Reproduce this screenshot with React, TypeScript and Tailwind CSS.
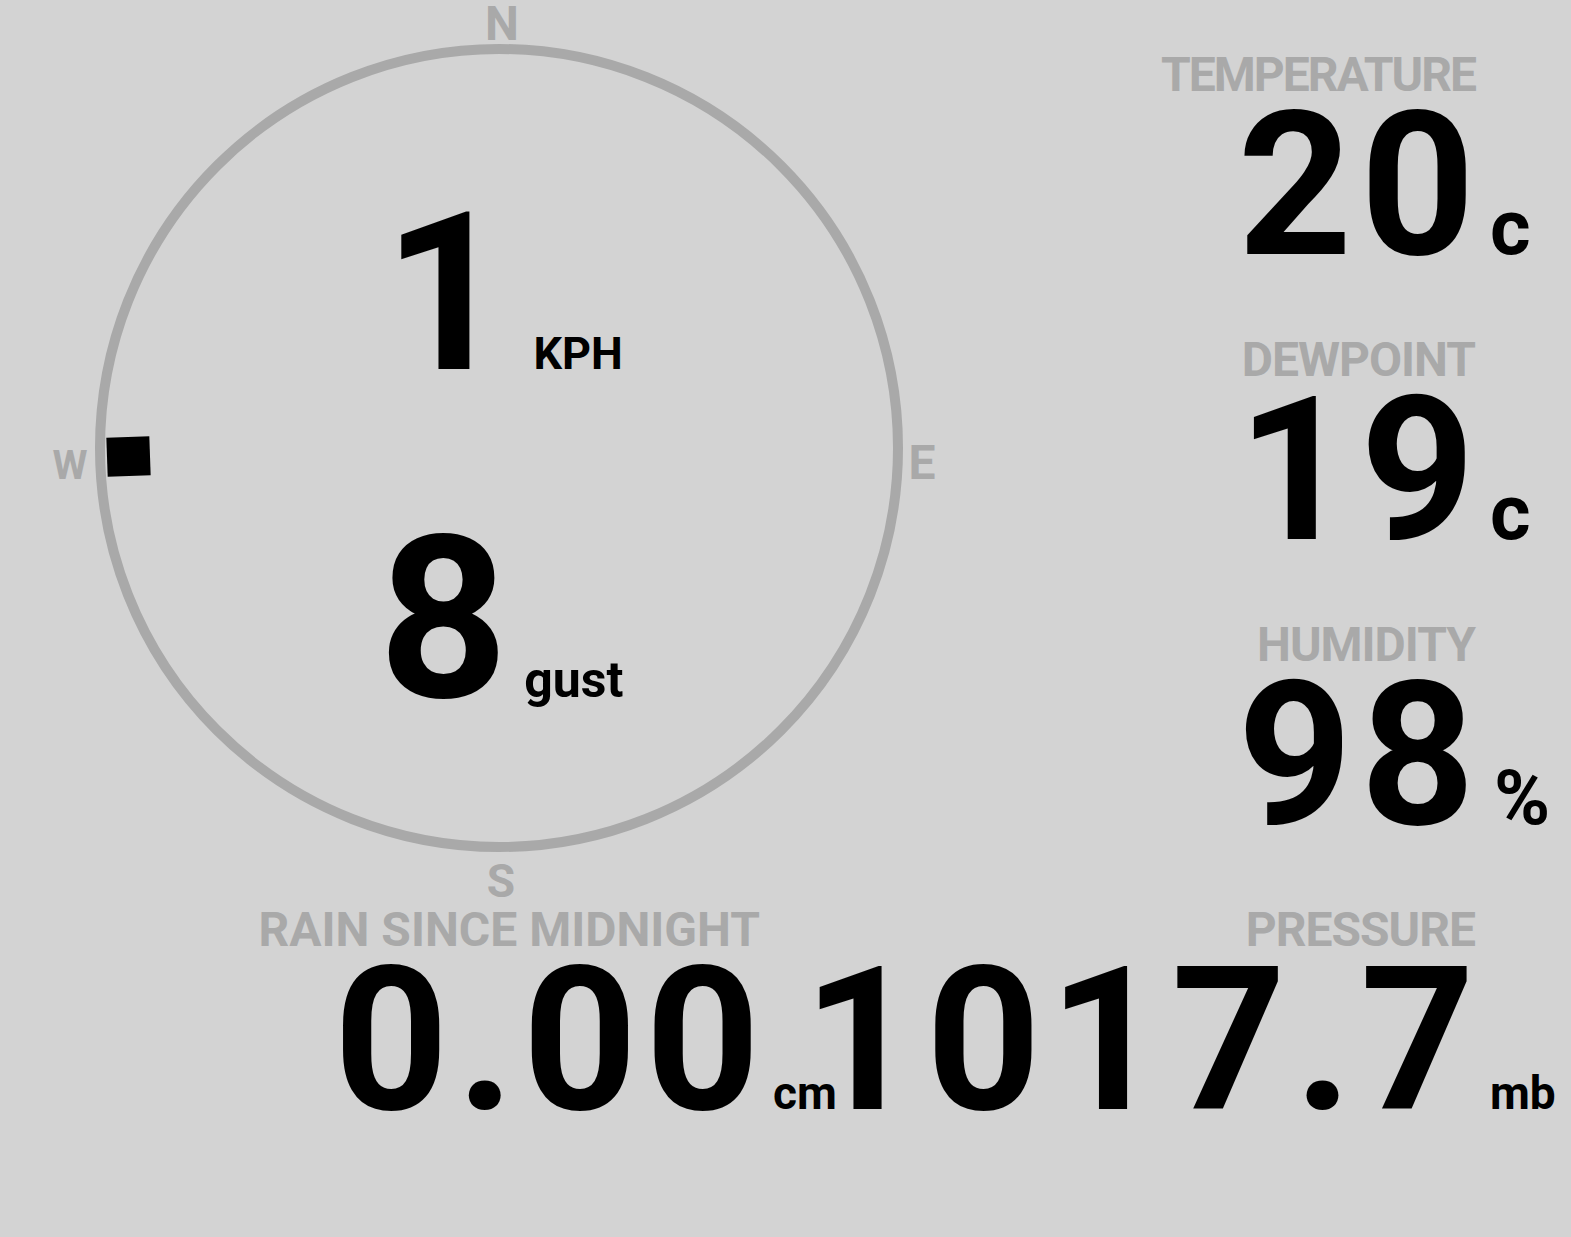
import React from "react";

// station readings
const stats = [
  { label: "TEMPERATURE", value: "20", unit: "c", unitClass: "text-[78px] pl-[15px]" },
  { label: "DEWPOINT", value: "19", unit: "c", unitClass: "text-[78px] pl-[15px]" },
  { label: "HUMIDITY", value: "98", unit: "%", unitClass: "text-[76px] pl-[19px]" },
];

function Stat({
  label,
  value,
  unit,
  unitClass,
  unitCol,
  labelClass = "tracking-[-1px]",
}: {
  label: string;
  value: string;
  unit: string;
  unitClass: string;
  unitCol: string;
  labelClass?: string;
}) {
  return (
    <div className={`grid ${unitCol} items-baseline gap-y-[18px]`}>
      <div className={`col-start-1 row-start-1 text-right text-[48px] leading-[36px] text-[#a9a9a9] whitespace-nowrap ${labelClass}`}>
        {label}
      </div>
      <div className="col-start-1 row-start-2 text-right text-[200px] leading-[150px] tracking-[8px] -mr-[8px] text-black whitespace-nowrap">
        {value}
      </div>
      <div className={`col-start-2 row-start-2 leading-[10px] text-black ${unitClass}`}>{unit}</div>
    </div>
  );
}

function Compass() {
  return (
    <div className="relative w-[840px] shrink-0 h-full">
      {/* dial */}
      <div className="absolute left-[95px] top-[44px] w-[808px] h-[808px] rounded-full border-[10px] border-[#a9a9a9] flex flex-col items-center pt-[155px]">
        <div className="flex items-baseline text-black pl-[8px]">
          <span className="text-[220px] leading-[170px]">1</span>
          <span className="ml-[24px] text-[45px] leading-none">KPH</span>
        </div>
        <div className="mt-[156px] flex items-baseline text-black pl-[4px]">
          <span className="text-[226px] leading-[170px] tracking-[4px]">8</span>
          <span className="ml-[12px] text-[50px] leading-none">gust</span>
        </div>
      </div>

      {/* cardinal points */}
      <span className="absolute left-[502px] top-[4px] -translate-x-1/2 text-[48px] leading-[40px] text-[#a9a9a9]">N</span>
      <span className="absolute left-[501px] top-[864px] -translate-x-1/2 text-[46px] leading-[34px] text-[#a9a9a9]">S</span>
      <span className="absolute left-[70px] top-[451px] -translate-x-1/2 text-[40px] leading-[30px] text-[#a9a9a9]">W</span>
      <span className="absolute left-[922px] top-[445px] -translate-x-1/2 text-[48px] leading-[36px] text-[#a9a9a9]">E</span>

      {/* wind direction marker */}
      <div className="absolute left-[107px] top-[437px] w-[43px] h-[39px] bg-black -rotate-2" />
    </div>
  );
}

export default function App() {
  return (
    <div
      className="w-full min-h-screen bg-[#d3d3d3] font-bold overflow-hidden"
      style={{ fontFamily: "Roboto, 'Liberation Sans', sans-serif" }}
    >
      <div className="flex h-[912px]">
        <Compass />
        <div className="flex-1 flex flex-col items-end gap-[81px] pt-[57px]">
          {stats.map((s) => (
            <Stat
              key={s.label}
              {...s}
              unitCol="grid-cols-[auto_96px]"
              labelClass={s.label === "TEMPERATURE" ? "tracking-[-2px]" : "tracking-[-1px]"}
            />
          ))}
        </div>
      </div>

      <div className="flex">
        <div className="w-[840px] shrink-0 flex justify-end">
          <Stat
            label="RAIN SINCE MIDNIGHT"
            value="0.00"
            unit="cm"
            unitClass="text-[46px] pl-[13px]"
            unitCol="grid-cols-[auto_80px]"
            labelClass="tracking-[0px]"
          />
        </div>
        <div className="flex-1 min-w-0 flex justify-end">
          <Stat label="PRESSURE" value="1017.7" unit="mb" unitClass="text-[46px] pl-[15px]" unitCol="grid-cols-[auto_96px]" />
        </div>
      </div>
    </div>
  );
}
